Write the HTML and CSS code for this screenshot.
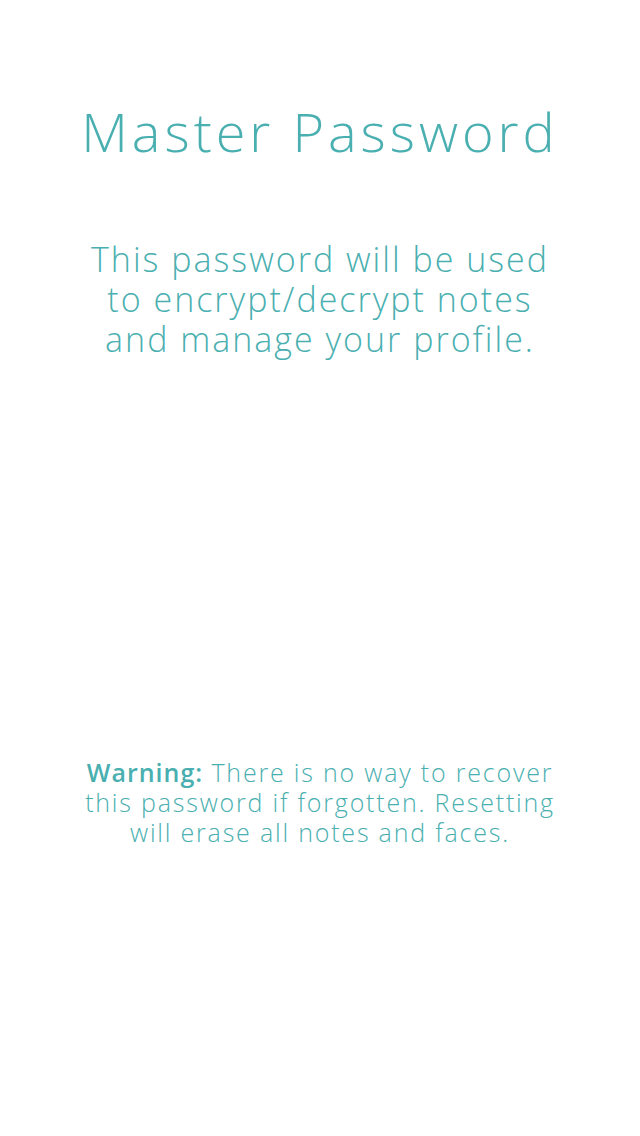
FILE: index.html
```html
<!DOCTYPE html>
<html>
<head>
<meta charset="utf-8">
<link rel="stylesheet" href="styles.css">
</head>
<body>
<main class="screen">
  <h1 class="title">Master Password</h1>
  <p class="intro">This password will be used<br>to encrypt/decrypt notes<br>and manage your profile.</p>
  <p class="warning"><strong>Warning:</strong> There is no way to recover<br>this password if forgotten. Resetting<br>will erase all notes and faces.</p>
</main>
</body>
</html>
```

FILE: styles.css
```css
html, body {
  margin: 0;
  padding: 0;
  background: #ffffff;
}
.screen {
  width: 640px;
  height: 1136px;
  display: flex;
  flex-direction: column;
  align-items: center;
  font-family: "Open Sans", sans-serif;
  color: #4aafb0;
  text-align: center;
}
.title {
  margin: 99px 0 0;
  font-size: 54px;
  font-weight: 300;
  line-height: 64px;
  letter-spacing: 4px;
}
.intro {
  margin: 76px 0 0;
  font-size: 34px;
  font-weight: 300;
  line-height: 40px;
  letter-spacing: 2px;
}
.warning {
  margin: 398px 0 0;
  font-size: 25px;
  font-weight: 300;
  line-height: 30px;
  letter-spacing: 1.8px;
}
.warning strong {
  font-weight: 600;
  letter-spacing: 1px;
}
```
